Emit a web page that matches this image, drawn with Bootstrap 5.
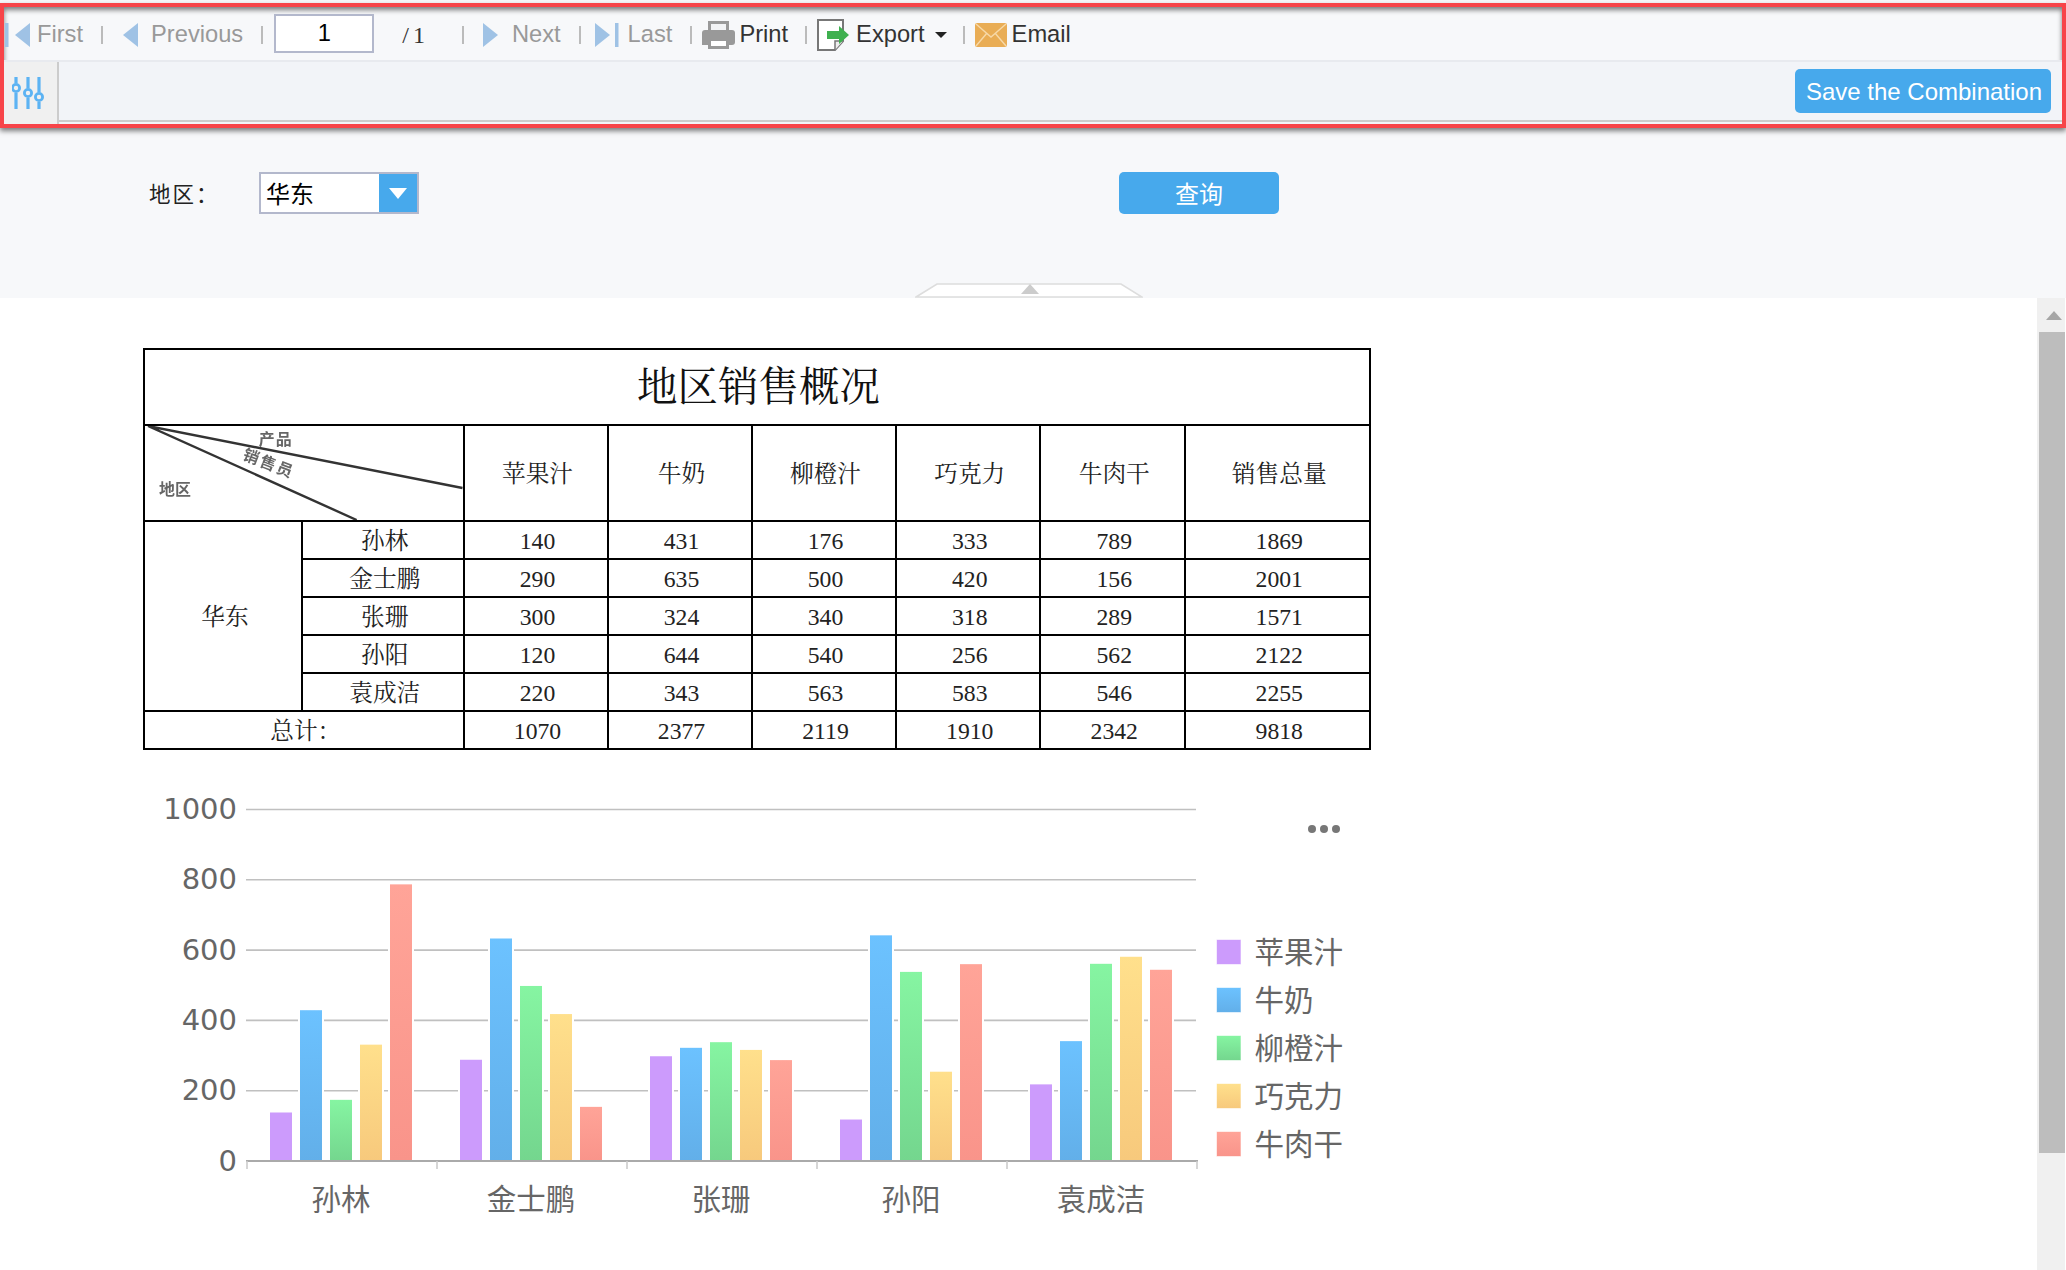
<!DOCTYPE html>
<html lang="zh">
<head>
<meta charset="utf-8">
<title>地区销售概况</title>
<link href="https://cdn.jsdelivr.net/npm/bootstrap@5.3.0/dist/css/bootstrap.min.css" rel="stylesheet">
<style>
html,body{height:100%;overflow:hidden;}
body{background:#f7f8fa;font-family:"Liberation Sans",Arial,"Noto Sans CJK SC",sans-serif;color:#333;}
.rp-page{width:2066px;height:1270px;display:flex;flex-direction:column;padding-top:3px;}
.rp-frame{height:125px;width:2066px;border:4px solid #f74449;box-shadow:0 3px 5px rgba(0,0,0,.5),inset 0 3px 5px rgba(0,0,0,.5);display:flex;flex-direction:column;flex:none;}
.rp-tools{height:55px;border-bottom:2px solid #e8eaef;font-size:23.7px;line-height:1;flex:none;padding-top:2px;}
.rp-tools svg{display:block;flex:none;}
.rp-off{color:#999;}
.rp-sep{width:2px;height:18px;background:#bbb;flex:none;}
.rp-m5{margin-left:5px}.rp-m6{margin-left:6px}.rp-m7{margin-left:7px}.rp-m9{margin-left:9px}.rp-m10{margin-left:10px}.rp-m11{margin-left:11px}.rp-m13{margin-left:13px}.rp-m14{margin-left:14px}.rp-m16{margin-left:16px}.rp-m17{margin-left:17px}.rp-m18{margin-left:18px}.rp-m19{margin-left:19px}.rp-m20{margin-left:20px}.rp-m4{margin-left:4px}.rp-m1{margin-left:1px}
.rp-page-input{width:100px;height:39px;margin-top:-2px;border:2px solid #b3b8cc;text-align:center;background:#fff;color:#000;font-size:23.7px;padding:0;border-radius:0;}
.rp-total{font-family:"Liberation Serif",serif;color:#333;font-size:24px;letter-spacing:4px;margin-left:28px;}
.rp-sep-after-total{margin-left:33px;}
.rp-caret{width:0;height:0;border-left:6px solid transparent;border-right:6px solid transparent;border-top:6px solid #222;flex:none;}
.rp-combos{flex:1;background:#f2f4f8;min-height:0;}
.rp-gear{width:55px;background:#f0f0f0;border-right:2px solid #ccc;flex:none;padding-left:8px;}
.rp-combo-bar{flex:none;width:calc(100% - 55px);height:60px;border-bottom:2px solid #ccc;padding-right:11px;}
.rp-save{background:#47a9ec;color:#fff;border:0;border-radius:5px;width:256px;height:44px;font-size:24px;padding:1px 0 0 2px;line-height:1;white-space:nowrap;}
.rp-filter{height:170px;flex:none;position:relative;padding-top:44px;}
.rp-label{font-family:"Noto Sans CJK SC",sans-serif;font-size:21.5px;letter-spacing:2px;width:110px;margin-left:149px;color:#222;line-height:42px;}
.rp-select{width:160px;height:42px;border:2px solid #b3b8cc;background:#fff;font-family:"Noto Sans CJK SC",sans-serif;font-size:24px;color:#000;}
.rp-select-text{flex:1;padding-left:5px;line-height:38px;}
.rp-select-btn{width:38px;background:#47a9ec;display:flex;align-items:center;justify-content:center;}
.rp-query{margin-left:700px;width:160px;height:42px;background:#47a9ec;color:#fff;border:0;border-radius:5px;font-family:"Noto Sans CJK SC",sans-serif;font-size:24px;padding:0;line-height:1;}
.rp-handle{position:absolute;left:915px;bottom:0;display:block;}
.rp-body{flex:1;min-height:0;background:#fff;}
.rp-report{flex:1;min-width:0;padding:50px 0 0 143px;}
.rp-table{table-layout:fixed;width:1228px;border-collapse:collapse;font-family:"Liberation Serif","Noto Serif CJK SC","Noto Sans CJK SC",serif;font-size:23.7px;color:#222;margin:0;}
.rp-table td{border:2px solid #000;padding:3px 0 0 4px;text-align:center;vertical-align:middle;height:38px;line-height:1;}
.rp-table .rp-title td{height:76px;font-size:40.5px;color:#111;padding:2px 0 0 3px;}
.rp-table .rp-head td{height:96px;}
.rp-table td.rp-diag{padding:0;}
.rp-diag svg{display:block;width:100%;height:94px;filter:blur(.45px);}
.rp-c1{width:158px}.rp-c2{width:161.5px}.rp-c3{width:144px}.rp-c4{width:144.5px}.rp-c5{width:185.5px}
.rp-chart{display:block;margin:29px 0 0 -143px;}
.rp-scroll{width:28px;margin-right:1px;background:#f0f0f0;flex:none;display:flex;flex-direction:column;align-items:stretch;}
.rp-scroll-btn{height:34px;display:flex;align-items:center;padding-left:9px;flex:none;}
.rp-scroll-thumb{height:821px;background:#bdbdbd;margin-left:2px;flex:none;}
</style>
</head>
<body>
<div class="rp-page">
  <header class="rp-frame">
    <div class="rp-tools d-flex align-items-center">
      <svg class="rp-m1" width="25" height="24" viewBox="0 0 25 24"><rect x="0" y="0" width="3.5" height="24" fill="#9fc2e5"/><path d="M25 0V24L10 12Z" fill="#9fc2e5"/></svg>
      <span class="rp-off rp-m7">First</span>
      <span class="rp-sep rp-m18"></span>
      <svg class="rp-m20" width="15" height="24" viewBox="0 0 15 24"><path d="M15 0V24L0 12Z" fill="#9fc2e5"/></svg>
      <span class="rp-off rp-m13">Previous</span>
      <span class="rp-sep rp-m18"></span>
      <input class="rp-page-input rp-m11" value="1" aria-label="page">
      <span class="rp-total">/1</span>
      <span class="rp-sep rp-sep-after-total"></span>
      <svg class="rp-m19" width="15" height="24" viewBox="0 0 15 24"><path d="M0 0V24L15 12Z" fill="#9fc2e5"/></svg>
      <span class="rp-off rp-m14">Next</span>
      <span class="rp-sep rp-m18"></span>
      <svg class="rp-m14" width="24" height="24" viewBox="0 0 24 24"><path d="M0 0V24L15 12Z" fill="#9fc2e5"/><rect x="20" y="0" width="3.5" height="24" fill="#9fc2e5"/></svg>
      <span class="rp-off rp-m9">Last</span>
      <span class="rp-sep rp-m18"></span>
      <svg class="rp-m10" width="33" height="28" viewBox="0 0 33 28"><rect x="7.5" y="1.5" width="18" height="10" fill="#f2f3f5" stroke="#999" stroke-width="3"/><path d="M3 9H30a3 3 0 0 1 3 3V21a3 3 0 0 1-3 3H0V12a3 3 0 0 1 3-3Z" fill="#999"/><rect x="7.5" y="18.5" width="18" height="8" fill="#fff" stroke="#999" stroke-width="3"/></svg>
      <span class="rp-m4">Print</span>
      <span class="rp-sep rp-m17"></span>
      <svg class="rp-m10" width="33" height="32" viewBox="0 0 33 32"><path d="M1 1H26V22L18 31H1Z" fill="#fff" stroke="#777" stroke-width="2"/><path d="M26 22H18V31" fill="#eee" stroke="#777" stroke-width="1.5"/><path d="M10 12H22V7L32 16L22 25V20H10Z" fill="#3eb04f"/></svg>
      <span class="rp-m6">Export</span>
      <span class="rp-caret rp-m10"></span>
      <span class="rp-sep rp-m16"></span>
      <svg class="rp-m10" width="32" height="24" viewBox="0 0 32 24"><rect width="32" height="24" rx="2" fill="#e9ad55"/><path d="M1 1L16 14L31 1M1 23L12 10M31 23L20 10" fill="none" stroke="#f7d9a8" stroke-width="1.4"/></svg>
      <span class="rp-m5">Email</span>
    </div>
    <div class="rp-combos d-flex">
      <div class="rp-gear d-flex align-items-center">
        <svg width="32" height="32" viewBox="0 0 32 32" fill="none" stroke="#5cb3f3" stroke-width="3.2"><path d="M4 0V6M4 16V32M16 0V11M16 21V32M27 0V15M27 25V32"/><circle cx="4" cy="11" r="3.6" stroke-width="2.8"/><circle cx="16" cy="16" r="3.6" stroke-width="2.8"/><circle cx="27" cy="20" r="3.6" stroke-width="2.8"/></svg>
      </div>
      <div class="rp-combo-bar d-flex align-items-center justify-content-end">
        <button class="rp-save" type="button">Save the Combination</button>
      </div>
    </div>
  </header>
  <section class="rp-filter d-flex align-items-start">
    <span class="rp-label">地区：</span>
    <div class="rp-select d-flex"><span class="rp-select-text">华东</span><span class="rp-select-btn"><svg width="18" height="11" viewBox="0 0 18 11"><path d="M0 0H18L9 11Z" fill="#fff"/></svg></span></div>
    <button class="rp-query" type="button">查询</button>
    <svg class="rp-handle" width="228" height="15" viewBox="0 0 228 15"><path d="M1 14L22 1H206L227 14Z" fill="#fff" stroke="#ddd" stroke-width="1.6"/><path d="M115 1L124 11H106Z" fill="#ccc"/></svg>
  </section>
  <main class="rp-body d-flex">
    <div class="rp-report">
      <table class="rp-table">
        <colgroup><col class="rp-c1"><col class="rp-c2"><col class="rp-c3"><col class="rp-c3"><col class="rp-c3"><col class="rp-c4"><col class="rp-c4"><col class="rp-c5"></colgroup>
        <tr class="rp-title"><td colspan="8">地区销售概况</td></tr>
        <tr class="rp-head">
          <td colspan="2" class="rp-diag">
            <svg viewBox="0 0 318 94" preserveAspectRatio="none">
              <path d="M3 0L318 62M3 0L212 94" stroke="#333" stroke-width="2.4" fill="none"/>
              <g font-family="'Noto Sans CJK SC',sans-serif" font-size="16" fill="#666" font-weight="700">
                <text x="114" y="19" letter-spacing="1">产品</text>
                <text transform="translate(97 33) rotate(21)" letter-spacing="2">销售员</text>
                <text x="14" y="69">地区</text>
              </g>
            </svg>
          </td>
          <td>苹果汁</td><td>牛奶</td><td>柳橙汁</td><td>巧克力</td><td>牛肉干</td><td>销售总量</td>
        </tr>
        <tr><td rowspan="5">华东</td><td>孙林</td><td>140</td><td>431</td><td>176</td><td>333</td><td>789</td><td>1869</td></tr>
        <tr><td>金士鹏</td><td>290</td><td>635</td><td>500</td><td>420</td><td>156</td><td>2001</td></tr>
        <tr><td>张珊</td><td>300</td><td>324</td><td>340</td><td>318</td><td>289</td><td>1571</td></tr>
        <tr><td>孙阳</td><td>120</td><td>644</td><td>540</td><td>256</td><td>562</td><td>2122</td></tr>
        <tr><td>袁成洁</td><td>220</td><td>343</td><td>563</td><td>583</td><td>546</td><td>2255</td></tr>
        <tr><td colspan="2">总计：</td><td>1070</td><td>2377</td><td>2119</td><td>1910</td><td>2342</td><td>9818</td></tr>
      </table>
      <svg class="rp-chart" id="rpChart" width="1400" height="440" viewBox="0 780 1400 440"></svg>
    </div>
    <aside class="rp-scroll">
      <div class="rp-scroll-btn"><svg width="16" height="9" viewBox="0 0 16 9"><path d="M8 0L16 9H0Z" fill="#a6a6a6"/></svg></div>
      <div class="rp-scroll-thumb"></div>
    </aside>
  </main>
</div>
<script>
(function(){
  var svg=document.getElementById('rpChart');
  var names=['孙林','金士鹏','张珊','孙阳','袁成洁'];
  var legend=['苹果汁','牛奶','柳橙汁','巧克力','牛肉干'];
  var data=[[140,431,176,333,789],[290,635,500,420,156],[300,324,340,318,289],[120,644,540,256,562],[220,343,563,583,546]];
  var col=[['#cc9bfc','#cc9bfc'],['#6cc2ff','#62afe9'],['#86f5a2','#74d68e'],['#ffe08c','#f7c97c'],['#ffa498','#f9948a']];
  var h='<defs>';
  col.forEach(function(c,i){h+='<linearGradient id="g'+i+'" x1="0" y1="0" x2="0" y2="1"><stop offset="0" stop-color="'+c[0]+'"/><stop offset="1" stop-color="'+c[1]+'"/></linearGradient>';});
  h+='</defs>';
  var base=1162,unit=.3515;
  [1000,800,600,400,200,0].forEach(function(v){
    var y=base-v*unit;
    if(v)h+='<line x1="246" x2="1196" y1="'+y+'" y2="'+y+'" stroke="#c0c0c0" stroke-width="1.6"/>';
    h+='<text x="237" y="'+(y+9.5)+'" text-anchor="end" font-family="DejaVu Sans,sans-serif" font-size="29" fill="#666">'+v+'</text>';
  });
  data.forEach(function(g,i){
    g.forEach(function(v,j){
      var x=270+190*i+30*j,t=base-v*unit+.7;
      h+='<rect x="'+(x-1)+'" y="'+(t-1)+'" width="24" height="'+(base-t+1)+'" fill="url(#g'+j+')" stroke="#fff" stroke-width="2"/>';
    });
    h+='<text x="'+(341+190*i)+'" y="1210.5" text-anchor="middle" font-family="Noto Sans CJK SC,sans-serif" font-size="29.5" fill="#666">'+names[i]+'</text>';
  });
  h+='<line x1="246" x2="1198" y1="'+base+'" y2="'+base+'" stroke="#aaa" stroke-width="2"/>';
  for(var i=0;i<=5;i++){var x=247+190*i;h+='<line x1="'+x+'" x2="'+x+'" y1="'+base+'" y2="1170" stroke="#ccc" stroke-width="1.6"/>';}
  legend.forEach(function(n,j){
    var y=940+48*j;
    h+='<rect x="1216.5" y="'+(y+.5)+'" width="24.5" height="25" fill="url(#g'+j+')" stroke="#fff" stroke-opacity=".6"/>';
    h+='<text x="1254.5" y="'+(y+24)+'" font-family="Noto Sans CJK SC,sans-serif" font-size="29.5" fill="#666">'+n+'</text>';
  });
  [1312,1324,1336].forEach(function(x){h+='<circle cx="'+x+'" cy="830" r="4" fill="#777"/>';});
  svg.innerHTML=h;
})();
</script>
<script src="https://cdn.jsdelivr.net/npm/bootstrap@5.3.0/dist/js/bootstrap.bundle.min.js"></script>
</body>
</html>
